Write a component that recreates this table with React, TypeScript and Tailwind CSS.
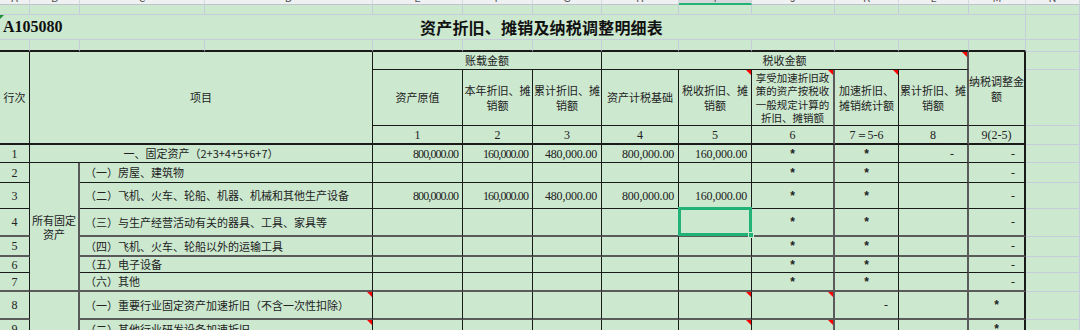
import React from "react";

const LIGHT = "border-r border-b border-[#c6ccda]";
const B1 = "border-b border-b-[#1a1a1a]";
const G2 = "border-b-2 border-b-[#5a5a5a]";
const RB = "border-r border-r-[#1a1a1a]";
const RG = "border-r-2 border-r-[#5a5a5a]";
const RO = "border-r-2 border-r-[#1a1a1a]";
const SERIF = "font-['Liberation_Serif',serif]";

function Tri() {
  return (
    <span className="absolute right-0 top-0 h-0 w-0 border-l-[5px] border-t-[5px] border-l-transparent border-t-[#ff0000]" />
  );
}

function Cell({ c, children, tri }: { c: string; children?: React.ReactNode; tri?: boolean }) {
  return (
    <div className={"relative flex items-center " + c}>
      {children}
      {tri && <Tri />}
    </div>
  );
}

function Lines({ lines, lh }: { lines: string[]; lh: string }) {
  return (
    <div className="flex flex-col items-center">
      {lines.map((t) => (
        <span key={t} className={"block whitespace-nowrap " + lh}>
          {t}
        </span>
      ))}
    </div>
  );
}

function Mark({ s, pr }: { s?: string; pr: string }) {
  if (s === "*")
    return (
      <div className="flex w-full justify-center">
        <span className="font-['Liberation_Sans',sans-serif] text-[12px] font-bold leading-none text-[#222]">*</span>
      </div>
    );
  if (s === "-")
    return (
      <div className={"flex w-full justify-end " + pr}>
        <span className={SERIF + " text-[12px] leading-none text-[#222]"}>-</span>
      </div>
    );
  return null;
}

type RowDef = {
  n: string;
  bot: string;
  item: string;
  first?: boolean;
  bcell?: React.ReactNode;
  vals?: string[];
  j?: string;
  k?: string;
  l?: string;
  m?: string;
  triItem?: boolean;
  triI?: boolean;
  triJ?: boolean;
  sel?: boolean;
};

const V = ["800,000.00", "160,000.00", "480,000.00", "800,000.00", "160,000.00"];

function DataRow({ r }: { r: RowDef }) {
  const vals = r.vals ?? ["", "", "", "", ""];
  return (
    <>
      <Cell c={`${r.bot} ${RB} justify-center ${SERIF} text-[12px] text-[#222]`}>{r.n}</Cell>
      {r.bcell}
      {r.first ? (
        <Cell c={`col-span-3 ${r.bot} ${RB} justify-center text-[11px] text-[#222] whitespace-nowrap`}>{r.item}</Cell>
      ) : (
        <Cell tri={r.triItem} c={`col-span-2 ${r.bot} ${RB} justify-start pl-[5px] text-[11px] text-[#222] whitespace-nowrap`}>
          {r.item}
        </Cell>
      )}
      <Cell c={`${r.bot} ${RB} justify-end pr-[4px] ${SERIF} text-[12px] tracking-[-0.9px] text-[#222]`}>{vals[0]}</Cell>
      <Cell c={`${r.bot} ${RB} justify-end pr-[4px] ${SERIF} text-[12px] tracking-[-0.9px] text-[#222]`}>{vals[1]}</Cell>
      <Cell c={`${r.bot} ${RB} justify-end pr-[4px] ${SERIF} text-[12px] tracking-[-0.2px] text-[#222]`}>{vals[2]}</Cell>
      <Cell c={`${r.bot} ${RB} justify-end pr-[4px] ${SERIF} text-[12px] tracking-[-0.2px] text-[#222]`}>{vals[3]}</Cell>
      <Cell tri={r.triI} c={`${r.bot} ${RB} justify-end pr-[4px] ${SERIF} text-[12px] tracking-[-0.2px] text-[#222]`}>
        {vals[4]}
        {r.sel && (
          <div className="pointer-events-none absolute -left-[1px] -top-[2px] -right-[1px] -bottom-[1px] z-10 border-[3px] border-[#20b277]">
            <div className="absolute -bottom-[5px] -right-[5px] h-[6px] w-[6px] border border-[#cce8cf] bg-[#20b277]" />
          </div>
        )}
      </Cell>
      <Cell tri={r.triJ} c={`${r.bot} ${RG}`}>
        <Mark s={r.j} pr="pr-[10px]" />
      </Cell>
      <Cell c={`${r.bot} ${RB}`}>
        <Mark s={r.k} pr="pr-[10px]" />
      </Cell>
      <Cell c={`${r.bot} ${RG}`}>
        <Mark s={r.l} pr="pr-[13px]" />
      </Cell>
      <Cell c={`${r.bot} ${RO}`}>
        <Mark s={r.m} pr="pr-[9px]" />
      </Cell>
      <div className={LIGHT} />
    </>
  );
}

const ROWS: RowDef[] = [
  { n: "1", bot: B1, item: "一、固定资产（2+3+4+5+6+7）", first: true, vals: V, j: "*", k: "*", l: "-", m: "-" },
  {
    n: "2",
    bot: B1,
    item: "（一）房屋、建筑物",
    j: "*",
    k: "*",
    m: "-",
    bcell: (
      <Cell c={`row-span-6 ${G2} ${RG} justify-center text-[11px] text-[#222]`}>
        <Lines lines={["所有固定", "资产"]} lh="leading-[14px]" />
      </Cell>
    ),
  },
  { n: "3", bot: B1, item: "（二）飞机、火车、轮船、机器、机械和其他生产设备", vals: V, j: "*", k: "*", m: "-" },
  { n: "4", bot: G2, item: "（三）与生产经营活动有关的器具、工具、家具等", sel: true, j: "*", k: "*", m: "-" },
  { n: "5", bot: G2, item: "（四）飞机、火车、轮船以外的运输工具", j: "*", k: "*", m: "-" },
  { n: "6", bot: B1, item: "（五）电子设备", j: "*", k: "*", m: "-" },
  { n: "7", bot: G2, item: "（六）其他", j: "*", k: "*", m: "-" },
  {
    n: "8",
    bot: G2,
    item: "（一）重要行业固定资产加速折旧（不含一次性扣除）",
    triItem: true,
    triI: true,
    triJ: true,
    k: "-",
    m: "*",
    bcell: <Cell c={`row-span-2 ${G2} ${RG}`} />,
  },
  { n: "9", bot: G2, item: "（二）其他行业研发设备加速折旧", triItem: true, triI: true, triJ: true, m: "*" },
];

const LETTERS = ["A", "B", "C", "D", "E", "F", "G", "H", "I", "J", "K", "L", "M", "N"];

export default function App() {
  const hdr = "text-[11px] text-[#222] whitespace-nowrap text-center justify-center";
  return (
    <div className="h-[330px] w-[1080px] overflow-hidden bg-[#cce8cf] font-['Noto_Sans_CJK_SC',sans-serif]">
      <div className="grid grid-cols-[30px_50px_125px_168px_90px_70px_69px_77px_73px_83px_64px_70px_57px_54px] grid-rows-[5px_10px_25px_12px_18px_56px_19px_18px_20px_26px_28px_20px_16px_19px_28px_20px]">
        {/* column header strip */}
        {LETTERS.map((l, i) =>
          i === 8 ? (
            <div key={l} className="flex justify-center overflow-hidden border-r border-b-2 border-r-[#d0d4da] border-b-[#22b276] bg-[#d5d9dd]">
              <span className="-mt-[8px] text-[11px] leading-none text-[#555]">{l}</span>
            </div>
          ) : (
            <div key={l} className="flex justify-center overflow-hidden border-r border-b border-r-[#d5d9de] border-b-[#bfc4cb] bg-[#eef0f2]">
              <span className="-mt-[8px] text-[11px] leading-none text-[#555]">{l}</span>
            </div>
          )
        )}
        {/* empty row */}
        {LETTERS.map((l) => (
          <div key={"e" + l} className={LIGHT} />
        ))}
        {/* title row */}
        <div className={"relative col-span-13 flex items-center " + LIGHT}>
          <span className="absolute left-0 top-0 h-0 w-0 border-r-[4px] border-t-[4px] border-r-transparent border-t-[#1f8f3a]" />
          <span className={SERIF + " w-[420px] pl-[3px] text-[16px] font-bold text-[#111]"}>A105080</span>
          <span className="text-[16px] font-bold tracking-[0.2px] text-[#111]">资产折旧、摊销及纳税调整明细表</span>
        </div>
        <div className={LIGHT} />
        {/* spacer row */}
        {LETTERS.slice(0, 13).map((l) => (
          <div key={"s" + l} className="border-r border-b-2 border-r-[#c6ccda] border-b-[#1a1a1a]" />
        ))}
        <div className={LIGHT} />

        {/* header row 1 */}
        <Cell c={`row-span-3 border-b-2 border-b-[#1a1a1a] ${RB} ${hdr}`}>行次</Cell>
        <Cell c={`col-span-3 row-span-3 border-b-2 border-b-[#1a1a1a] ${RB} ${hdr}`}>项目</Cell>
        <Cell c={`col-span-3 ${B1} ${RB} ${hdr}`}>账载金额</Cell>
        <Cell tri c={`col-span-5 ${B1} ${RG} ${hdr}`}>税收金额</Cell>
        <Cell c={`row-span-2 ${B1} ${RO} ${hdr}`}>
          <Lines lines={["纳税调整金", "额"]} lh="leading-[15px]" />
        </Cell>
        <div className={LIGHT} />

        {/* header row 2 */}
        <Cell c={`${B1} ${RB} ${hdr}`}>资产原值</Cell>
        <Cell c={`${B1} ${RB} ${hdr}`}>
          <Lines lines={["本年折旧、摊", "销额"]} lh="leading-[15px]" />
        </Cell>
        <Cell c={`${B1} ${RB} ${hdr}`}>
          <Lines lines={["累计折旧、摊", "销额"]} lh="leading-[15px]" />
        </Cell>
        <Cell c={`${B1} ${RB} ${hdr}`}>资产计税基础</Cell>
        <Cell tri c={`${B1} ${RB} ${hdr}`}>
          <Lines lines={["税收折旧、摊", "销额"]} lh="leading-[15px]" />
        </Cell>
        <Cell tri c={`${B1} ${RG} text-[10.5px] text-[#222] whitespace-nowrap text-center justify-center`}>
          <Lines lines={["享受加速折旧政", "策的资产按税收", "一般规定计算的", "折旧、摊销额"]} lh="leading-[13.5px]" />
        </Cell>
        <Cell tri c={`${B1} ${RB} ${hdr}`}>
          <Lines lines={["加速折旧、", "摊销统计额"]} lh="leading-[15px]" />
        </Cell>
        <Cell c={`${B1} ${RG} ${hdr}`}>
          <Lines lines={["累计折旧、摊", "销额"]} lh="leading-[15px]" />
        </Cell>
        <div className={LIGHT} />

        {/* header row 3 */}
        {["1", "2", "3", "4", "5"].map((t) => (
          <Cell key={"h" + t} c={`border-b-2 border-b-[#1a1a1a] ${RB} justify-center ${SERIF} text-[12px] text-[#222]`}>
            {t}
          </Cell>
        ))}
        <Cell c={`border-b-2 border-b-[#1a1a1a] ${RG} justify-center ${SERIF} text-[12px] text-[#222]`}>6</Cell>
        <Cell c={`border-b-2 border-b-[#1a1a1a] ${RB} justify-center ${SERIF} text-[12px] text-[#222] whitespace-nowrap`}>7＝5-6</Cell>
        <Cell c={`border-b-2 border-b-[#1a1a1a] ${RG} justify-center ${SERIF} text-[12px] text-[#222]`}>8</Cell>
        <Cell c={`border-b-2 border-b-[#1a1a1a] ${RO} justify-center ${SERIF} text-[12px] text-[#222] whitespace-nowrap`}>9(2-5)</Cell>
        <div className={LIGHT} />

        {ROWS.map((r) => (
          <DataRow key={r.n} r={r} />
        ))}
      </div>
    </div>
  );
}
